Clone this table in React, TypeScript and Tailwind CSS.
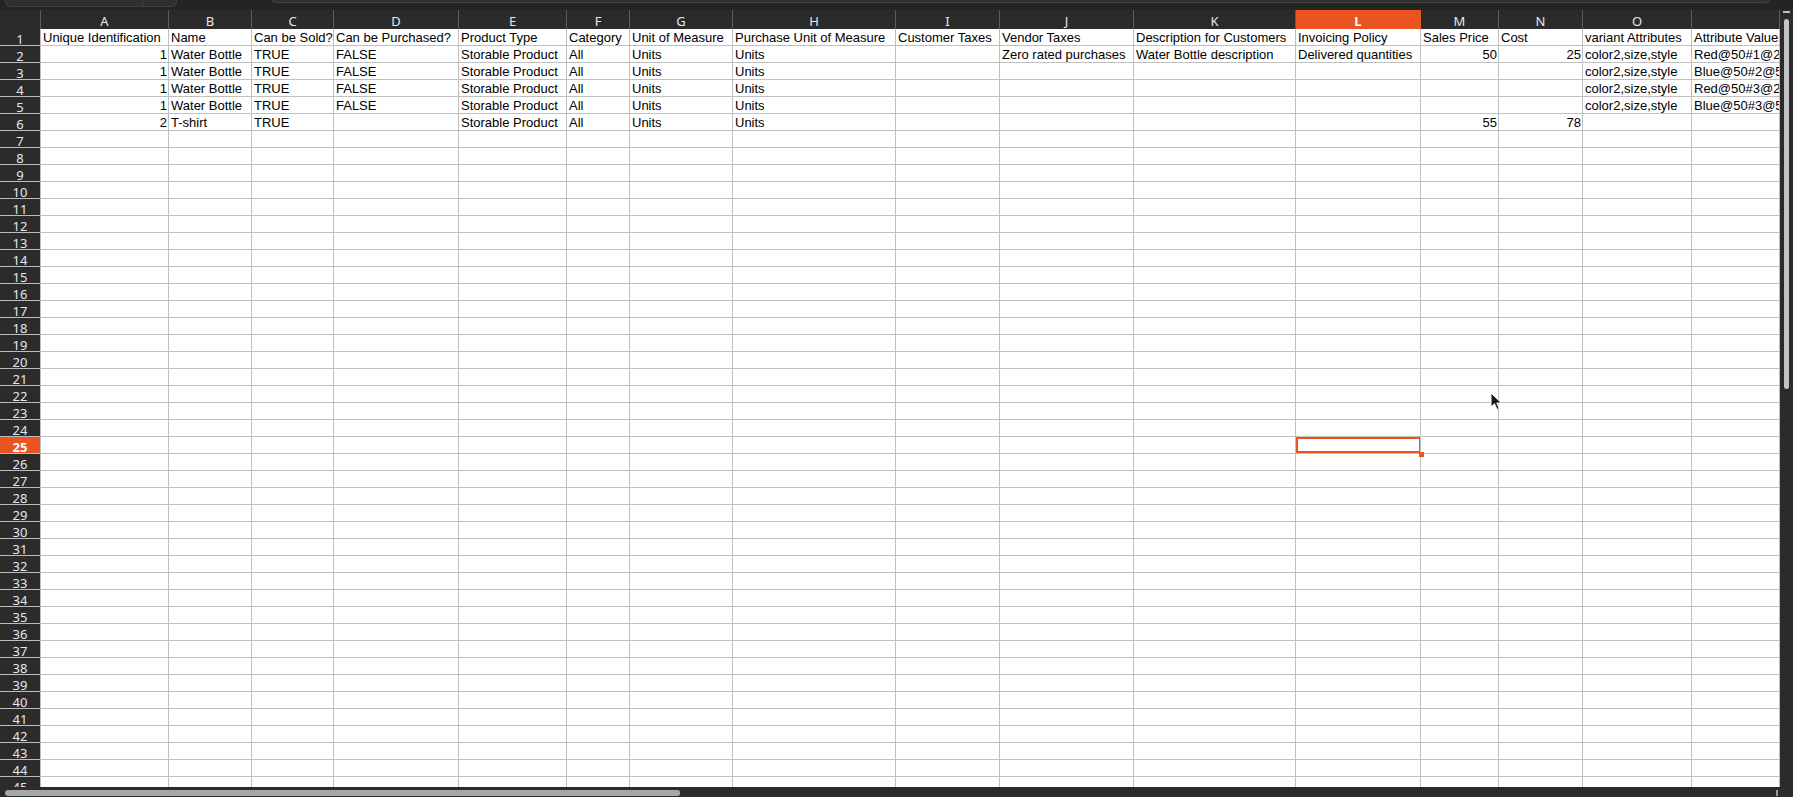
const colWidths = [41, 128, 83, 82, 125, 108, 63, 103, 163, 104, 134, 162, 125, 78, 84, 109, 88];
const letters = ["A", "B", "C", "D", "E", "F", "G", "H", "I", "J", "K", "L", "M", "N", "O", ""];

type Cell = string | number | null;

// one entry per column A..P
const data: Cell[][] = [
  [
    "Unique Identification",
    "Name",
    "Can be Sold?",
    "Can be Purchased?",
    "Product Type",
    "Category",
    "Unit of Measure",
    "Purchase Unit of Measure",
    "Customer Taxes",
    "Vendor Taxes",
    "Description for Customers",
    "Invoicing Policy",
    "Sales Price",
    "Cost",
    "variant Attributes",
    "Attribute Values",
  ],
  [1, "Water Bottle", "TRUE", "FALSE", "Storable Product", "All", "Units", "Units", null, "Zero rated purchases", "Water Bottle description", "Delivered quantities", 50, 25, "color2,size,style", "Red@50#1@25,Small@10#1@10"],
  [1, "Water Bottle", "TRUE", "FALSE", "Storable Product", "All", "Units", "Units", null, null, null, null, null, null, "color2,size,style", "Blue@50#2@5,Small@10#2@10"],
  [1, "Water Bottle", "TRUE", "FALSE", "Storable Product", "All", "Units", "Units", null, null, null, null, null, null, "color2,size,style", "Red@50#3@25,Large@10#3@10"],
  [1, "Water Bottle", "TRUE", "FALSE", "Storable Product", "All", "Units", "Units", null, null, null, null, null, null, "color2,size,style", "Blue@50#3@5,Large@10#3@10"],
  [2, "T-shirt", "TRUE", null, "Storable Product", "All", "Units", "Units", null, null, null, null, 55, 78, null, null],
];

const ROWS = 45;
const SEL_ROW = 25;
const SEL_COL = 11; // L

const uiFont = { fontFamily: '"Noto Sans", "Open Sans", sans-serif' };
const cellFont = { fontFamily: '"Liberation Sans", Arial, sans-serif' };

const TopBar = () => (
  <div className="h-[10px] flex shrink-0 bg-[#242424]">
    <div className="ml-[5px] w-[172px] h-[7px] flex rounded-b-[6px] border border-t-0 border-[#414141] bg-[#2f2f2f] overflow-hidden">
      <div className="w-[137px] h-full border-r border-[#414141]" />
    </div>
    <div className="ml-[95px] w-[1498px] h-[3px] rounded-b-[4px] border border-t-0 border-[#414141] bg-[#2f2f2f]" />
  </div>
);

const HeaderRow = () => (
  <div className="flex h-[19px] bg-[#2b2b2b]" style={uiFont}>
    {colWidths.map((w, i) => {
      const selected = i === SEL_COL + 1;
      return (
        <div
          key={i}
          style={{ width: w }}
          className={
            "shrink-0 h-full flex items-center justify-center pt-[2px] text-[13px] leading-[16px] border-r " +
            (selected
              ? "bg-[#e95420] text-white font-bold border-[#e95420]"
              : "text-[#e4e8ec] border-[#5c5c5c]")
          }
        >
          {i === 0 ? "" : letters[i - 1]}
        </div>
      );
    })}
  </div>
);

const SheetRow = ({ row }: { row: number }) => {
  const values = data[row - 1];
  const selectedRow = row === SEL_ROW;
  return (
    <div className="flex h-[17px]">
      <div
        style={{ width: colWidths[0], ...uiFont }}
        className={
          "shrink-0 h-full flex items-center justify-center pt-[3px] text-[13px] leading-[14px] border-r border-b border-[#bdbdbd] " +
          (selectedRow ? "bg-[#e95420] text-white font-bold" : "bg-[#2b2b2b] text-[#e4e8ec]")
        }
      >
        {row}
      </div>
      {colWidths.slice(1).map((w, c) => {
        const v = values ? values[c] : null;
        const isNum = typeof v === "number";
        const isSel = selectedRow && c === SEL_COL;
        return (
          <div
            key={c}
            style={{ width: w, ...cellFont }}
            className={
              "relative shrink-0 h-full bg-white border-r border-b border-[#c0c0c0] pt-[1px] text-[13px] leading-[16px] text-black whitespace-nowrap overflow-hidden " +
              (isNum ? "text-right pr-[1px]" : "pl-[2px]")
            }
          >
            {v}
            {isSel && <div className="absolute top-0 left-0 -right-px bottom-0 border-2 border-[#e95420]" />}
          </div>
        );
      })}
    </div>
  );
};

const Cursor = () => (
  <svg className="absolute left-[1490px] top-[382px]" width="13" height="19" viewBox="0 0 13 19">
    <path d="M1 1 L1 15 L4.5 11.8 L7 17.5 L9.2 16.5 L6.8 11 L11.5 11 Z" fill="#1a1a1a" stroke="#ffffff" strokeWidth="1" strokeLinejoin="round" />
  </svg>
);

export default function App() {
  return (
    <div className="w-[1793px] h-[797px] flex flex-col bg-[#2b2b2b] overflow-hidden relative">
      <TopBar />
      <div className="flex flex-1 min-h-0">
        <div className="relative flex-1 overflow-hidden">
          <HeaderRow />
          {Array.from({ length: ROWS }, (_, i) => (
            <SheetRow key={i} row={i + 1} />
          ))}
          <div className="absolute left-[1419px] top-[442px] w-[5px] h-[5px] bg-[#e95420]" />
          <Cursor />
        </div>
        <div className="w-[13px] shrink-0 bg-[#2b2b2b] flex flex-col items-center">
          <div className="mt-[1px] w-[7px] h-[2px] bg-[#bdbdbd]" />
          <div className="mt-[6px] w-[5px] h-[370px] rounded-full bg-[#c4c4c4]" />
        </div>
      </div>
      <div className="h-[10px] shrink-0 bg-[#2b2b2b] flex items-center">
        <div className="ml-[5px] w-[675px] h-[6px] mt-[2px] rounded-l-[3px] rounded-r-[2px] bg-[#a6a6a6]" />
        <div className="ml-auto mr-[15px] w-[2px] h-[6px] mt-[2px] bg-[#9a9a9a]" />
      </div>
    </div>
  );
}
